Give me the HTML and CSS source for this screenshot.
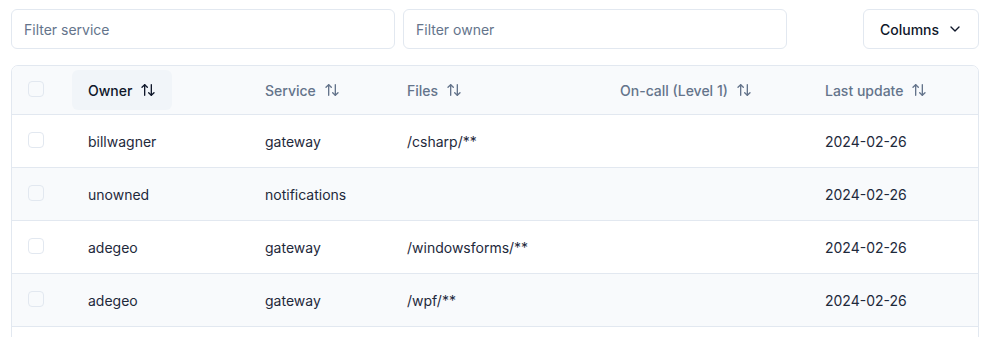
FILE: index.html
```html
<!DOCTYPE html>
<html lang="en">
<head>
  <meta charset="UTF-8">
  <meta name="viewport" content="width=device-width, initial-scale=1.0">
  <title>Code owners</title>
  <link rel="stylesheet" href="styles.css">
</head>
<body>
  <div class="page">
    <!-- Filtres -->
    <div class="toolbar">
      <input class="filter" type="text" placeholder="Filter service">
      <input class="filter" type="text" placeholder="Filter owner">
      <button class="columns-btn">
        Columns
        <svg class="icon" viewBox="0 0 24 24"><path d="m6 9 6 6 6-6"/></svg>
      </button>
    </div>

    <!-- Tableau -->
    <div class="table">
      <div class="row head">
        <div class="cell"><span class="check"></span></div>
        <div class="cell"><button class="sort active">Owner <svg class="icon" viewBox="0 0 24 24"><path d="m21 16-4 4-4-4"/><path d="M17 20V4"/><path d="m3 8 4-4 4 4"/><path d="M7 4v16"/></svg></button></div>
        <div class="cell"><button class="sort">Service <svg class="icon" viewBox="0 0 24 24"><path d="m21 16-4 4-4-4"/><path d="M17 20V4"/><path d="m3 8 4-4 4 4"/><path d="M7 4v16"/></svg></button></div>
        <div class="cell"><button class="sort">Files <svg class="icon" viewBox="0 0 24 24"><path d="m21 16-4 4-4-4"/><path d="M17 20V4"/><path d="m3 8 4-4 4 4"/><path d="M7 4v16"/></svg></button></div>
        <div class="cell"><button class="sort">On-call (Level 1) <svg class="icon" viewBox="0 0 24 24"><path d="m21 16-4 4-4-4"/><path d="M17 20V4"/><path d="m3 8 4-4 4 4"/><path d="M7 4v16"/></svg></button></div>
        <div class="cell"><button class="sort">Last update <svg class="icon" viewBox="0 0 24 24"><path d="m21 16-4 4-4-4"/><path d="M17 20V4"/><path d="m3 8 4-4 4 4"/><path d="M7 4v16"/></svg></button></div>
      </div>

      <div class="row">
        <div class="cell"><span class="check"></span></div>
        <div class="cell text">billwagner</div>
        <div class="cell text">gateway</div>
        <div class="cell text">/csharp/**</div>
        <div class="cell text"></div>
        <div class="cell text">2024-02-26</div>
      </div>
      <div class="row">
        <div class="cell"><span class="check"></span></div>
        <div class="cell text">unowned</div>
        <div class="cell text">notifications</div>
        <div class="cell text"></div>
        <div class="cell text"></div>
        <div class="cell text">2024-02-26</div>
      </div>
      <div class="row">
        <div class="cell"><span class="check"></span></div>
        <div class="cell text">adegeo</div>
        <div class="cell text">gateway</div>
        <div class="cell text">/windowsforms/**</div>
        <div class="cell text"></div>
        <div class="cell text">2024-02-26</div>
      </div>
      <div class="row">
        <div class="cell"><span class="check"></span></div>
        <div class="cell text">adegeo</div>
        <div class="cell text">gateway</div>
        <div class="cell text">/wpf/**</div>
        <div class="cell text"></div>
        <div class="cell text">2024-02-26</div>
      </div>
      <!-- ligne suivante, hors cadre -->
      <div class="row">
        <div class="cell"><span class="check"></span></div>
      </div>
    </div>
  </div>
</body>
</html>
```

FILE: styles.css
```css
/* Reset */
* {
  margin: 0;
  padding: 0;
  box-sizing: border-box;
}

html, body {
  overflow: hidden;
}

body {
  font-family: Inter, 'Liberation Sans', sans-serif;
  font-size: 14px;
  color: #1e293b;
  background: #fff;
}

.page {
  width: 979px;
  padding: 9px 0 0 11px;
}

/* Barre de filtres */
.toolbar {
  display: flex;
  gap: 8px;
  margin-bottom: 16px;
}

.filter {
  width: 384px;
  height: 40px;
  padding: 0 12px;
  border: 1px solid #e2e8f0;
  border-radius: 6px;
  font: inherit;
  color: #0f172a;
  outline: none;
}

.filter::placeholder {
  color: #64748b;
}

.columns-btn {
  margin-left: auto;
  height: 40px;
  width: 116px;
  padding: 0 16px;
  display: flex;
  align-items: center;
  gap: 8px;
  border: 1px solid #e2e8f0;
  border-radius: 6px;
  background: #fff;
  font: inherit;
  font-weight: 500;
  color: #0f172a;
}

.icon {
  width: 16px;
  height: 16px;
  fill: none;
  stroke: currentColor;
  stroke-width: 2;
  stroke-linecap: round;
  stroke-linejoin: round;
  flex-shrink: 0;
}

/* Tableau */
.table {
  border: 1px solid #e2e8f0;
  border-radius: 7px;
  overflow: hidden;
}

.row {
  display: grid;
  grid-template-columns: 60px 177px 142px 213px 205px 169px;
  align-items: center;
  height: 53px;
  border-bottom: 1px solid #e2e8f0;
}

.row:nth-child(odd) {
  background: #f8fafc;
}

.row.head {
  height: 49px;
}

.cell {
  padding-left: 16px;
  display: flex;
  align-items: center;
  white-space: nowrap;
}

.row.head .cell {
  padding-left: 0;
}

.row.head .cell:first-child {
  padding-left: 16px;
}

.check {
  display: block;
  width: 16px;
  height: 16px;
  border: 1px solid #e2e8f0;
  border-radius: 4px;
  background: #fff;
  margin-top: -3px;
}

.row:nth-child(odd) .check {
  background: transparent;
}

.sort {
  height: 40px;
  padding: 0 16px;
  display: flex;
  align-items: center;
  gap: 8px;
  border: none;
  border-radius: 6px;
  background: transparent;
  font: inherit;
  font-weight: 500;
  color: #64748b;
}

.sort.active {
  background: #f1f5f9;
  color: #0f172a;
}
```
